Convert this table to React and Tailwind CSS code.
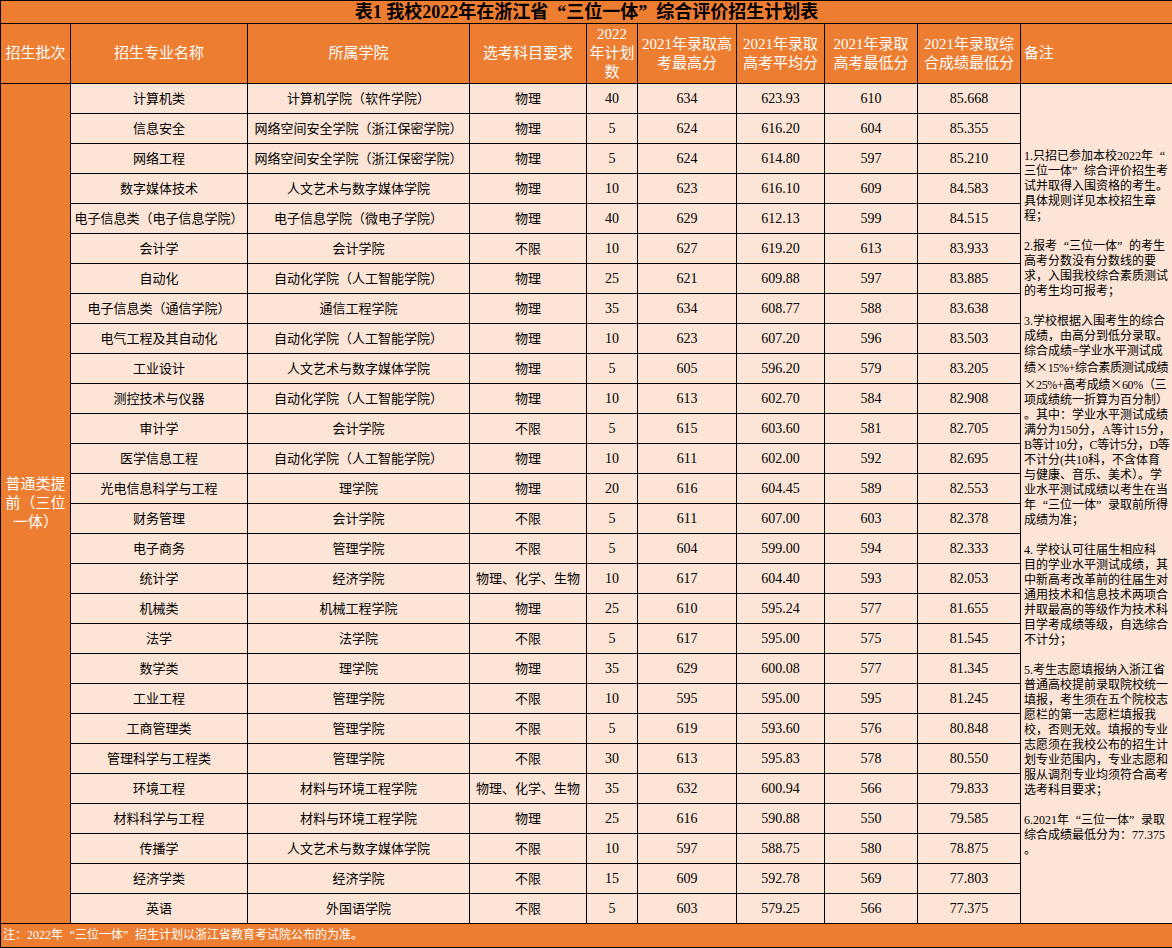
import React from "react";

const rows = [
  ["计算机类", "计算机学院（软件学院）", "物理", "40", "634", "623.93", "610", "85.668"],
  ["信息安全", "网络空间安全学院（浙江保密学院）", "物理", "5", "624", "616.20", "604", "85.355"],
  ["网络工程", "网络空间安全学院（浙江保密学院）", "物理", "5", "624", "614.80", "597", "85.210"],
  ["数字媒体技术", "人文艺术与数字媒体学院", "物理", "10", "623", "616.10", "609", "84.583"],
  ["电子信息类（电子信息学院）", "电子信息学院（微电子学院）", "物理", "40", "629", "612.13", "599", "84.515"],
  ["会计学", "会计学院", "不限", "10", "627", "619.20", "613", "83.933"],
  ["自动化", "自动化学院（人工智能学院）", "物理", "25", "621", "609.88", "597", "83.885"],
  ["电子信息类（通信学院）", "通信工程学院", "物理", "35", "634", "608.77", "588", "83.638"],
  ["电气工程及其自动化", "自动化学院（人工智能学院）", "物理", "10", "623", "607.20", "596", "83.503"],
  ["工业设计", "人文艺术与数字媒体学院", "物理", "5", "605", "596.20", "579", "83.205"],
  ["测控技术与仪器", "自动化学院（人工智能学院）", "物理", "10", "613", "602.70", "584", "82.908"],
  ["审计学", "会计学院", "不限", "5", "615", "603.60", "581", "82.705"],
  ["医学信息工程", "自动化学院（人工智能学院）", "物理", "10", "611", "602.00", "592", "82.695"],
  ["光电信息科学与工程", "理学院", "物理", "20", "616", "604.45", "589", "82.553"],
  ["财务管理", "会计学院", "不限", "5", "611", "607.00", "603", "82.378"],
  ["电子商务", "管理学院", "不限", "5", "604", "599.00", "594", "82.333"],
  ["统计学", "经济学院", "物理、化学、生物", "10", "617", "604.40", "593", "82.053"],
  ["机械类", "机械工程学院", "物理", "25", "610", "595.24", "577", "81.655"],
  ["法学", "法学院", "不限", "5", "617", "595.00", "575", "81.545"],
  ["数学类", "理学院", "物理", "35", "629", "600.08", "577", "81.345"],
  ["工业工程", "管理学院", "不限", "10", "595", "595.00", "595", "81.245"],
  ["工商管理类", "管理学院", "不限", "5", "619", "593.60", "576", "80.848"],
  ["管理科学与工程类", "管理学院", "不限", "30", "613", "595.83", "578", "80.550"],
  ["环境工程", "材料与环境工程学院", "物理、化学、生物", "35", "632", "600.94", "566", "79.833"],
  ["材料科学与工程", "材料与环境工程学院", "物理", "25", "616", "590.88", "550", "79.585"],
  ["传播学", "人文艺术与数字媒体学院", "不限", "10", "597", "588.75", "580", "78.875"],
  ["经济学类", "经济学院", "不限", "15", "609", "592.78", "569", "77.803"],
  ["英语", "外国语学院", "不限", "5", "603", "579.25", "566", "77.375"],
];

// [text, tight]
const notes = [
  ["1.只招已参加本校2022年“"],
  ["三位一体”综合评价招生考"],
  ["试并取得入围资格的考生。"],
  ["具体规则详见本校招生章"],
  ["程；"],
  [""],
  ["2.报考“三位一体”的考生"],
  ["高考分数没有分数线的要"],
  ["求，入围我校综合素质测试"],
  ["的考生均可报考；"],
  [""],
  ["3.学校根据入围考生的综合"],
  ["成绩，由高分到低分录取。"],
  ["综合成绩=学业水平测试成"],
  ["绩×15%+综合素质测试成绩", true],
  ["×25%+高考成绩×60%（三", true],
  ["项成绩统一折算为百分制）"],
  ["。其中：学业水平测试成绩"],
  ["满分为150分，A等计15分，"],
  ["B等计10分，C等计5分，D等", true],
  ["不计分(共10科，不含体育"],
  ["与健康、音乐、美术）。学"],
  ["业水平测试成绩以考生在当"],
  ["年“三位一体”录取前所得"],
  ["成绩为准；"],
  [""],
  ["4. 学校认可往届生相应科"],
  ["目的学业水平测试成绩，其"],
  ["中新高考改革前的往届生对"],
  ["通用技术和信息技术两项合"],
  ["并取最高的等级作为技术科"],
  ["目学考成绩等级，自选综合"],
  ["不计分；"],
  [""],
  ["5.考生志愿填报纳入浙江省"],
  ["普通高校提前录取院校统一"],
  ["填报，考生须在五个院校志"],
  ["愿栏的第一志愿栏填报我"],
  ["校，否则无效。填报的专业"],
  ["志愿须在我校公布的招生计"],
  ["划专业范围内，专业志愿和"],
  ["服从调剂专业均须符合高考"],
  ["选考科目要求；"],
  [""],
  ["6.2021年“三位一体”录取"],
  ["综合成绩最低分为：77.375"],
  ["。"],
];

function Fw({ text }) {
  const parts = text.split(/([“”×])/);
  return (
    <>
      {parts.map((p, i) => {
        if (p === "“")
          return (
            <span key={i} className="inline-block w-[1em] text-right">
              “
            </span>
          );
        if (p === "”")
          return (
            <span key={i} className="inline-block w-[1em] text-left">
              ”
            </span>
          );
        if (p === "×")
          return (
            <span key={i} className="inline-block w-[1em] text-center font-['Noto_Sans_CJK_SC']">
              ×
            </span>
          );
        return <React.Fragment key={i}>{p}</React.Fragment>;
      })}
    </>
  );
}

const th = "border border-black bg-[#ED7D31] text-white text-[15px] leading-[19px] font-normal text-center align-middle p-0";
const tdText = "border border-black bg-[#FCE4D6] text-black text-[13px] text-center align-middle p-0 whitespace-nowrap overflow-hidden";
const tdNum = "border border-black bg-[#FCE4D6] text-black text-[14px] text-center align-middle p-0 whitespace-nowrap";

export default function App() {
  return (
    <div className="w-[1172px] h-[948px] overflow-hidden bg-white font-['Liberation_Serif','Noto_Sans_CJK_SC',serif]">
      <table className="w-[1172px] table-fixed border-collapse">
        <colgroup>
          <col className="w-[70px]" />
          <col className="w-[177px]" />
          <col className="w-[222px]" />
          <col className="w-[117px]" />
          <col className="w-[51px]" />
          <col className="w-[99px]" />
          <col className="w-[88px]" />
          <col className="w-[93px]" />
          <col className="w-[103px]" />
          <col className="w-[152px]" />
        </colgroup>
        <tbody>
          <tr className="h-[23px]">
            <td colSpan={10} className="border border-black bg-[#ED7D31] text-black text-[18px] leading-[22px] font-bold text-center align-middle p-0 whitespace-nowrap">
              <Fw text="表1 我校2022年在浙江省“三位一体”综合评价招生计划表" />
            </td>
          </tr>
          <tr className="h-[60px]">
            <td className={th}>招生批次</td>
            <td className={th}>招生专业名称</td>
            <td className={th}>所属学院</td>
            <td className={th}>选考科目要求</td>
            <td className={th}>
              2022
              <br />
              年计划
              <br />
              数
            </td>
            <td className={th}>
              2021年录取高
              <br />
              考最高分
            </td>
            <td className={th}>
              2021年录取
              <br />
              高考平均分
            </td>
            <td className={th}>
              2021年录取
              <br />
              高考最低分
            </td>
            <td className={th}>
              2021年录取综
              <br />
              合成绩最低分
            </td>
            <td className="border border-black bg-[#ED7D31] text-white text-[15px] leading-[19px] font-normal text-left align-middle p-0 pl-[3px]">
              备注
            </td>
          </tr>
          {rows.map((r, i) => (
            <tr key={i} className="h-[30px]">
              {i === 0 && (
                <td rowSpan={28} className="border border-black bg-[#ED7D31] text-white text-[15px] leading-[19px] text-center align-middle p-0">
                  普通类提
                  <br />
                  前（三位
                  <br />
                  一体）
                </td>
              )}
              <td className={tdText}>{r[0]}</td>
              <td className={tdText}>{r[1]}</td>
              <td className={tdText}>{r[2]}</td>
              <td className={tdNum}>{r[3]}</td>
              <td className={tdNum}>{r[4]}</td>
              <td className={tdNum}>{r[5]}</td>
              <td className={tdNum}>{r[6]}</td>
              <td className={tdNum}>{r[7]}</td>
              {i === 0 && (
                <td rowSpan={28} className="border border-black bg-[#FCE4D6] text-black text-[12px] leading-[15px] text-left align-middle p-0 pl-[3px] overflow-hidden">
                  {notes.map(([n, tight], k) =>
                    n === "" ? (
                      <div key={k} className="h-[15px]" />
                    ) : (
                      <div key={k} className={tight ? "whitespace-nowrap tracking-[-0.35px]" : "whitespace-nowrap"}>
                        <Fw text={n} />
                      </div>
                    )
                  )}
                </td>
              )}
            </tr>
          ))}
          <tr className="h-[24px]">
            <td colSpan={10} className="border border-black bg-[#ED7D31] text-white text-[12px] leading-[15px] text-left align-middle p-0 pl-[2px] whitespace-nowrap">
              <Fw text="注：2022年“三位一体”招生计划以浙江省教育考试院公布的为准。" />
            </td>
          </tr>
        </tbody>
      </table>
    </div>
  );
}
